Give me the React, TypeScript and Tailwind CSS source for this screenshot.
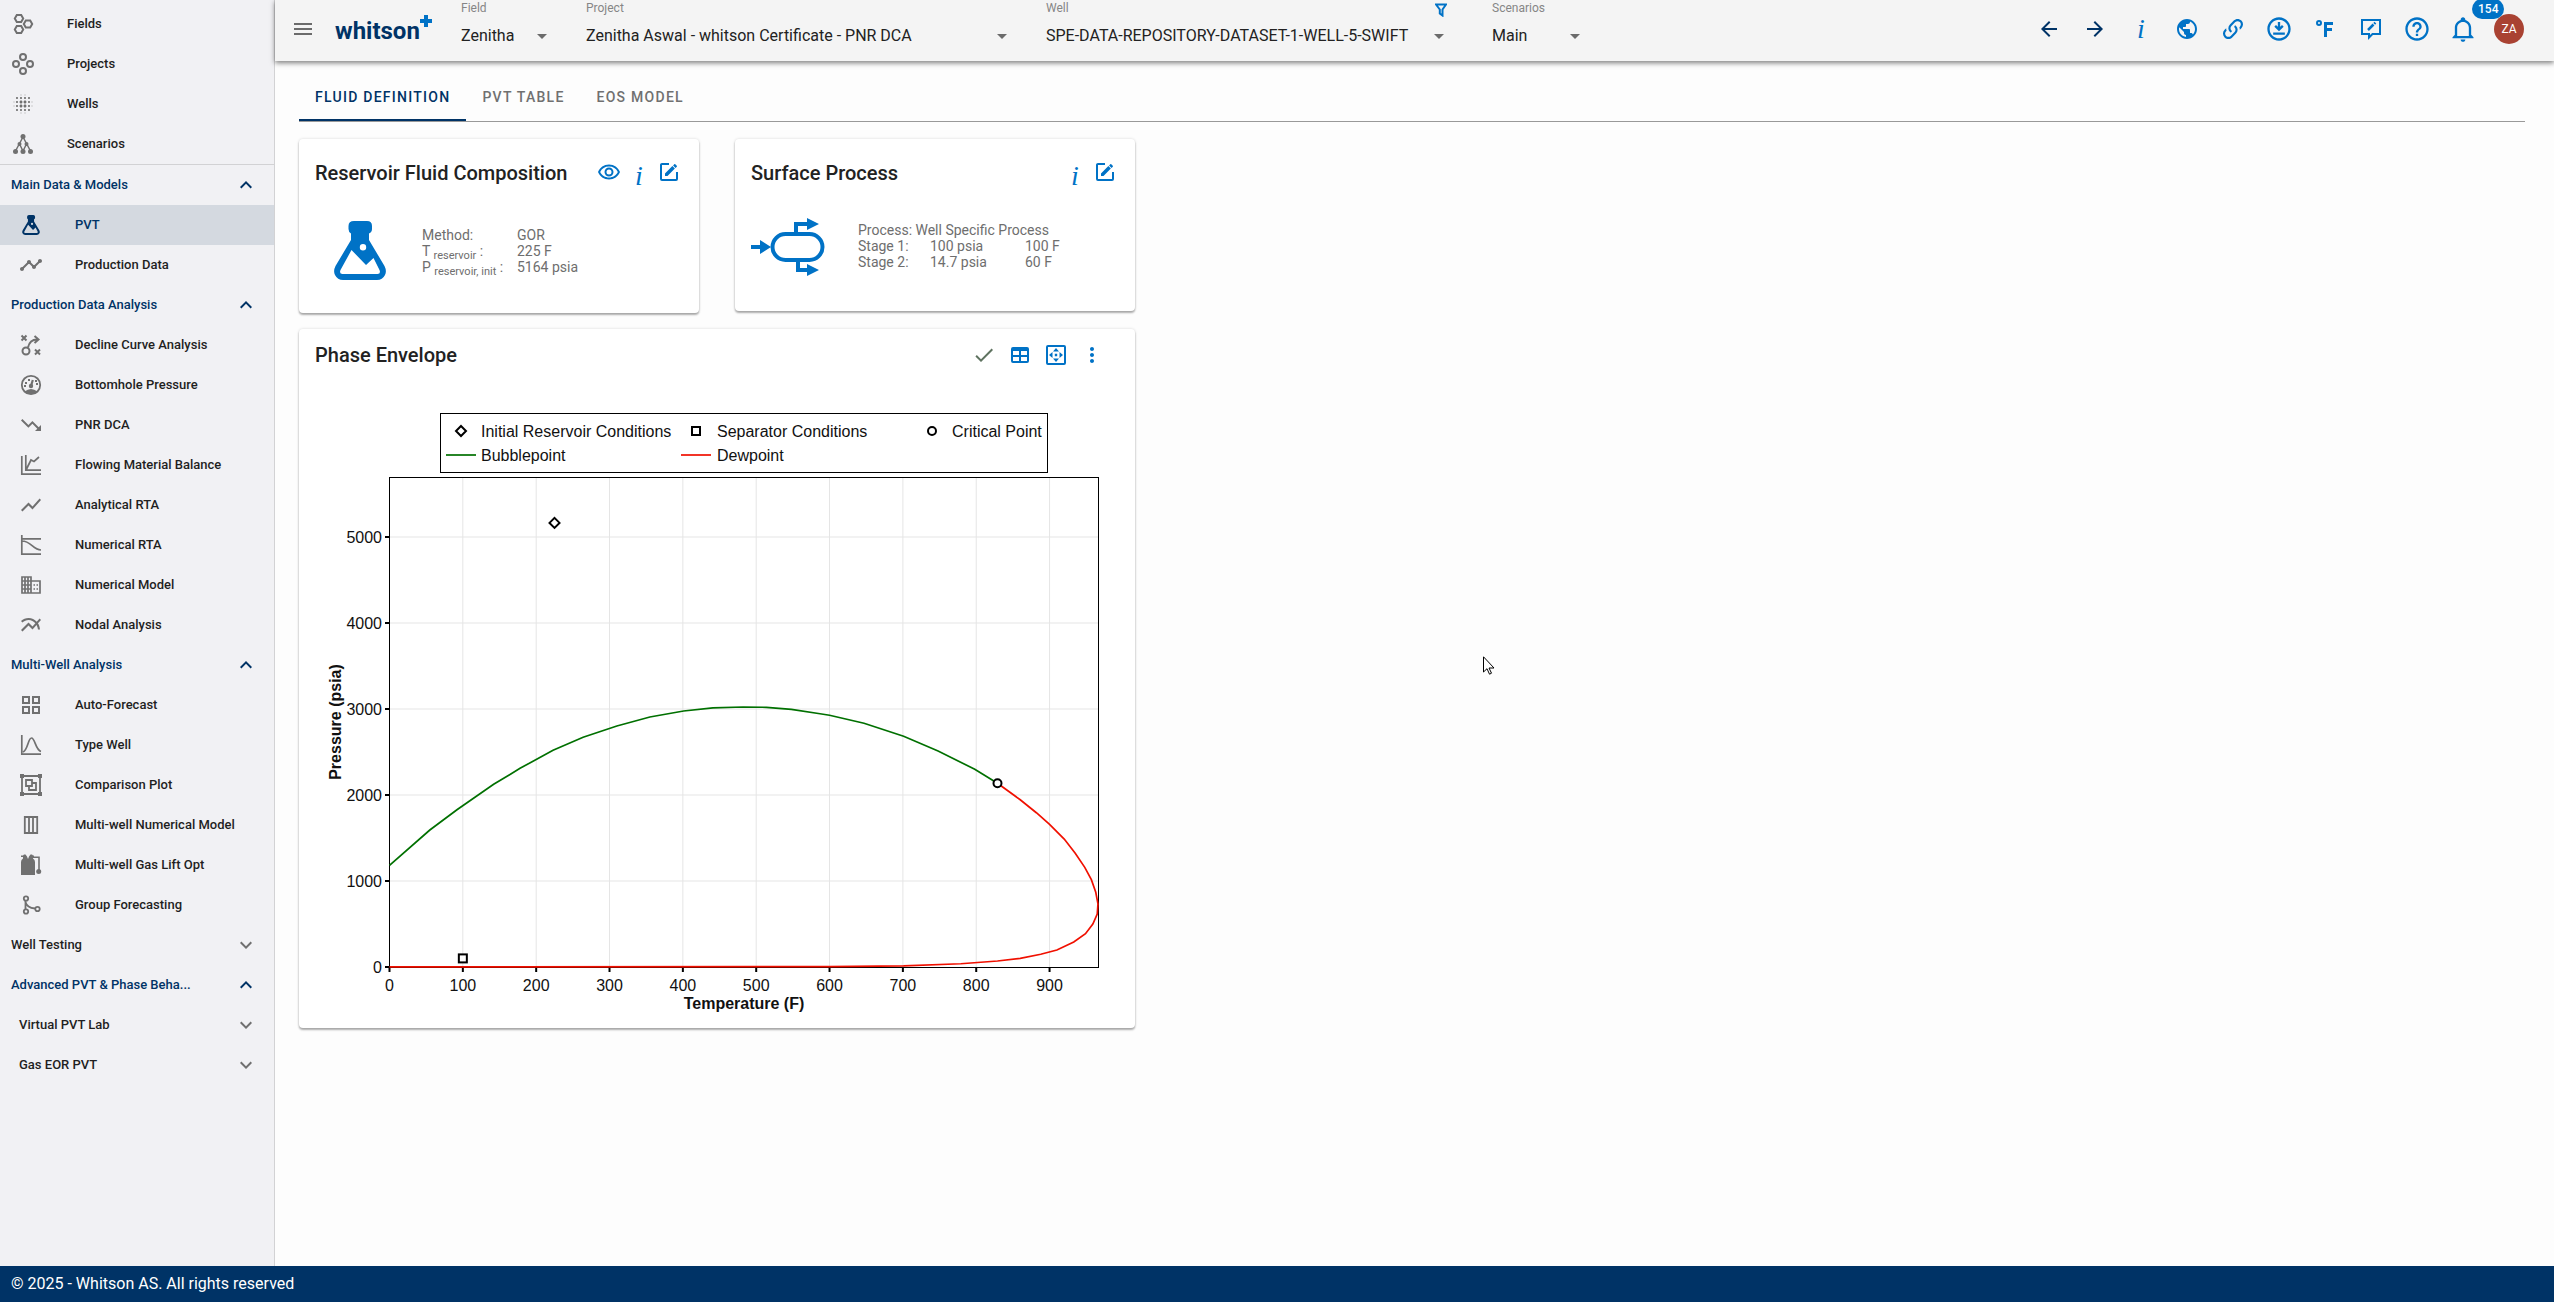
import { useState } from "react";
import {
  MdArrowBack,
  MdArrowDropDown,
  MdArrowForward,
  MdBlurOn,
  MdCheck,
  MdHelpOutline,
  MdKeyboardArrowDown,
  MdKeyboardArrowUp,
  MdMenu,
  MdMoreVert,
  MdMultilineChart,
  MdOutlineDownloadForOffline,
  MdOutlineRemoveRedEye,
  MdPublic,
  MdShowChart,
  MdTimeline,
  MdTrendingDown,
} from "react-icons/md";

/* ---------- icons ---------- */

function Fill({ d, className = "size-6" }) {
  return (
    <svg viewBox="0 0 24 24" fill="currentColor" fillRule="evenodd" className={className}>
      <path d={d} />
    </svg>
  );
}

function Line({ d, className = "size-6", width = 2, children = null }) {
  return (
    <svg viewBox="0 0 24 24" fill="none" stroke="currentColor" strokeWidth={width} className={className}>
      <path d={d} />
      {children}
    </svg>
  );
}

const hexagon = (x, y) => `M${x - 2.2} ${y - 3.5}h4.4l2 3.5-2 3.5h-4.4l-2-3.5z`;

const FieldsIcon = () => <Line d={hexagon(8, 6.5) + hexagon(17, 12) + hexagon(8, 17.5)} />;

const ProjectsIcon = () => (
  <Line d="">
    <circle cx="12" cy="5" r="3" />
    <circle cx="5" cy="12" r="3" />
    <circle cx="19" cy="12" r="3" />
    <circle cx="12" cy="19" r="3" />
  </Line>
);

const ScenariosIcon = () => (
  <svg viewBox="0 0 24 24" className="size-6" fill="currentColor">
    <path d="M12 5L4.5 19M12 5l7.5 14M8.5 12L12 19M15.5 12L12 19" stroke="currentColor" strokeWidth="1.5" />
    <circle cx="12" cy="4.5" r="2.5" />
    <circle cx="8.5" cy="12" r="2" />
    <circle cx="15.5" cy="12" r="2" />
    <circle cx="4.5" cy="19.5" r="2.5" />
    <circle cx="12" cy="19.5" r="2.5" />
    <circle cx="19.5" cy="19.5" r="2.5" />
  </svg>
);

function FlaskIcon({ className }) {
  return (
    <svg viewBox="0 0 52 59" fill="currentColor" fillRule="evenodd" className={className}>
      <path d="M20 0H33Q38 0 38 5V8Q38 11 35 12.5V19L50.5 45Q53 50 51 54Q48.5 59 43 59H9Q3.500 59 1 54Q-1 50 1.500 45L17 19V12.5Q14.5 11 14.5 8V5Q14.5 0 20 0ZM17.5 29L6.500 49Q5 53 8.500 53H43.5Q47 53 45.5 49L39.5 37L32 44ZM29 23A3.200 3.200 0 1 0 29 29.4A3.200 3.200 0 1 0 29 23Z" />
    </svg>
  );
}

const StrategyIcon = () => (
  <Line d="M2.500 2.500l5 5M7.500 2.500l-5 5M16 16.5l5 5M21 16.5l-5 5M9 14.5C10 10 12.5 6.500 18 6.500M15.5 3l4 3.500-4 3.500">
    <circle cx="7" cy="18" r="3.5" />
  </Line>
);

const GaugeIcon = () => (
  <svg viewBox="0 0 24 24" className="size-6">
    <circle cx="12" cy="12" r="9.2" fill="none" stroke="currentColor" strokeWidth="1.8" />
    <path d="M5.500 18.5Q12 13.5 18.5 18.5Q12 24 5.500 18.5Z" fill="currentColor" />
    <path d="M12 13l1.800-6" stroke="currentColor" strokeWidth="2.2" />
    <circle cx="12" cy="13" r="2.2" fill="currentColor" />
    <path d="M6 10h2M9 7h2M16 8h2M17 11h2M5 13h2" stroke="currentColor" strokeWidth="1.8" />
  </svg>
);

const BalanceIcon = () => <Line d="M2.800 3v18.2H22M6.800 2v15.2H22M7.500 16L12 7l3 1.500L20 4" width={1.7} />;
const RtaIcon = () => <Line d="M2.800 2v19.2H22M3 5.800h19M3 8C12 8 14 17 22 17" width={1.7} />;
const BellCurveIcon = () => <Line d="M2.800 2v19.2H22M4 19C9 17 9 5 12.5 5S16.5 17 22 18.5" width={1.7} />;

const BuildingIcon = () => (
  <Line d="M3 4h9v16H3zM12 8h9v12h-9M3 8h9M3 12h9M3 16h9M6 4v16M9 4v16M14.5 12H16M14.5 16H16M17.5 12H19M17.5 16H19" width={1.7} />
);

const TilesIcon = () => (
  <Fill d="M3 11H11V3H3M5 5H9V9H5M13 21H21V13H13M15 15H19V19H15M3 21H11V13H3M5 15H9V19H5M13 3V11H21V3M19 9H15V5H19Z" />
);

const GroupIcon = () => (
  <Line d="M3 3h18v18H3zM7 7h6v6H7zM13 10h4v7h-7v-4" width={1.8}>
    <path d="M1 1h4v4H1zM19 1h4v4h-4zM1 19h4v4H1zM19 19h4v4h-4z" fill="currentColor" stroke="none" />
  </Line>
);

const ColumnsIcon = () => <Line d="M5.800 4h12.4v16H5.800zM10 4v16M14 4v16" width={1.8} />;

const GasLiftIcon = () => (
  <svg viewBox="0 0 24 24" className="size-6" fill="currentColor">
    <path d="M2 22V9Q2 6.500 4 5.500V4H2V2.500H4L5 1.500H6.500L8 3.500L9 6L10 3.500L11.5 1.500H13L14 2.500H15V4H14V5.500Q16 6.500 16 9V22Z" />
    <path d="M14 4.300h6v14" fill="none" stroke="currentColor" strokeWidth="1.6" />
    <circle cx="19.7" cy="18.5" r="2.5" />
  </svg>
);

const BranchIcon = () => (
  <Line d="M6.500 7v10M6.500 9C7.500 13.5 11 15 16 15.5" width={1.8}>
    <circle cx="7" cy="5.5" r="2.2" />
    <circle cx="7" cy="18.5" r="2.2" />
    <circle cx="18.5" cy="16" r="2.2" />
  </Line>
);

const InfoIcon = () => <span className="font-['Liberation_Serif',serif] text-[28px] leading-6 italic">i</span>;

const LinkIcon = () => (
  <Fill
    className="size-[26px]"
    d="M10.59,13.41C11,13.8 11,14.44 10.59,14.83C10.2,15.22 9.56,15.22 9.17,14.83C7.22,12.88 7.22,9.71 9.17,7.76V7.76L12.71,4.22C14.66,2.27 17.83,2.27 19.78,4.22C21.73,6.17 21.73,9.34 19.78,11.29L18.29,12.78C18.3,11.96 18.17,11.14 17.89,10.36L18.36,9.88C19.54,8.71 19.54,6.81 18.36,5.64C17.19,4.46 15.29,4.46 14.12,5.64L10.59,9.17C9.41,10.34 9.41,12.24 10.59,13.41M13.41,9.17C13.8,8.78 14.44,8.78 14.83,9.17C16.78,11.12 16.78,14.29 14.83,16.24V16.24L11.29,19.78C9.34,21.73 6.17,21.73 4.22,19.78C2.27,17.83 2.27,14.66 4.22,12.71L5.71,11.22C5.7,12.04 5.83,12.86 6.11,13.65L5.64,14.12C4.46,15.29 4.46,17.19 5.64,18.36C6.81,19.54 8.71,19.54 9.88,18.36L13.41,14.83C14.59,13.66 14.59,11.76 13.41,10.59C13,10.2 13,9.56 13.41,9.17Z"
  />
);

const FahrenheitIcon = () => (
  <Fill d="M11,20V5H20V8H14V11H19V14H14V20H11M6,3A3,3 0 0,1 9,6A3,3 0 0,1 6,9A3,3 0 0,1 3,6A3,3 0 0,1 6,3M6,5A1,1 0 0,0 5,6A1,1 0 0,0 6,7A1,1 0 0,0 7,6A1,1 0 0,0 6,5Z" />
);

const FeedbackIcon = () => (
  <Line d="M3 3h18v14h-7.500L10 20.5V17H3z">
    <path d="M9 13l5.500-5.500M15.2 6.800l1.200-1.200" strokeWidth="2.5" />
  </Line>
);

const BellIcon = () => (
  <Fill
    className="size-7"
    d="M10 21H14C14 22.1 13.1 23 12 23S10 22.1 10 21M21 19V20H3V19L5 17V11C5 7.9 7 5.2 10 4.3V4C10 2.9 10.9 2 12 2S14 2.9 14 4V4.3C17 5.2 19 7.9 19 11V17L21 19M17 11C17 8.2 14.8 6 12 6S7 8.2 7 11V18H17V11Z"
  />
);

const EditIcon = () => (
  <Fill d="M5,3C3.89,3 3,3.89 3,5V19A2,2 0 0,0 5,21H19A2,2 0 0,0 21,19V12H19V19H5V5H12V3H5M17.78,4C17.61,4 17.43,4.07 17.3,4.2L16.08,5.41L18.58,7.91L19.8,6.7C20.06,6.44 20.06,6 19.8,5.75L18.25,4.2C18.12,4.07 17.95,4 17.78,4M15.37,6.12L8,13.5V16H10.5L17.87,8.62L15.37,6.12Z" />
);

const TableIcon = () => (
  <Fill d="M5,4H19A2,2 0 0,1 21,6V18A2,2 0 0,1 19,20H5A2,2 0 0,1 3,18V6A2,2 0 0,1 5,4M5,8V12H11V8H5M13,8V12H19V8H13M5,14V18H11V14H5M13,14V18H19V14H13Z" />
);

const FitIcon = () => (
  <svg viewBox="0 0 24 24" className="size-6" fill="currentColor">
    <rect x="3" y="3" width="18" height="18" rx="1" fill="none" stroke="currentColor" strokeWidth="2" />
    <path d="M12 5l3 3.500H9zM12 19l3-3.500H9zM5 12l3.500-3v6zM19 12l-3.500-3v6zM10.8 10.8h2.400v2.400h-2.400z" />
  </svg>
);

const SeparatorIcon = () => (
  <svg viewBox="0 0 74 58" className="h-[58px] w-[74px] shrink-0" fill="currentColor">
    <rect x="21.5" y="16" width="50" height="26" rx="13" fill="none" stroke="currentColor" strokeWidth="4" />
    <path d="M0 27h9v-5l11 7-11 7v-5H0zM43 15V4h13V0l12 6-12 6V8h-9v7zM45 43v11h11v4l12-6-12-6v4h-7v-7z" />
  </svg>
);

/* ---------- sidebar ---------- */

const topLinks = [
  { label: "Fields", icon: <FieldsIcon /> },
  { label: "Projects", icon: <ProjectsIcon /> },
  { label: "Wells", icon: <MdBlurOn className="size-6" /> },
  { label: "Scenarios", icon: <ScenariosIcon /> },
];

const sections = [
  {
    label: "Main Data & Models",
    items: [
      { label: "PVT", icon: <FlaskIcon className="mx-[3px] h-5 w-[18px]" /> },
      { label: "Production Data", icon: <MdTimeline className="size-6" /> },
    ],
  },
  {
    label: "Production Data Analysis",
    items: [
      { label: "Decline Curve Analysis", icon: <StrategyIcon /> },
      { label: "Bottomhole Pressure", icon: <GaugeIcon /> },
      { label: "PNR DCA", icon: <MdTrendingDown className="size-6" /> },
      { label: "Flowing Material Balance", icon: <BalanceIcon /> },
      { label: "Analytical RTA", icon: <MdShowChart className="size-6" /> },
      { label: "Numerical RTA", icon: <RtaIcon /> },
      { label: "Numerical Model", icon: <BuildingIcon /> },
      { label: "Nodal Analysis", icon: <MdMultilineChart className="size-6" /> },
    ],
  },
  {
    label: "Multi-Well Analysis",
    items: [
      { label: "Auto-Forecast", icon: <TilesIcon /> },
      { label: "Type Well", icon: <BellCurveIcon /> },
      { label: "Comparison Plot", icon: <GroupIcon /> },
      { label: "Multi-well Numerical Model", icon: <ColumnsIcon /> },
      { label: "Multi-well Gas Lift Opt", icon: <GasLiftIcon /> },
      { label: "Group Forecasting", icon: <BranchIcon /> },
    ],
  },
];

function SectionButton({ label, open = false, nested = false }) {
  return (
    <button
      aria-expanded={open}
      className={`flex h-10 w-full items-center justify-between pr-4 text-left ${nested ? "pl-[19px]" : "pl-[11px]"} ${open ? "text-[#003366]" : "text-[#1f1f1f]"}`}
    >
      {label}
      {open ? <MdKeyboardArrowUp className="size-6" /> : <MdKeyboardArrowDown className="size-6 text-[#707070]" />}
    </button>
  );
}

function Sidebar() {
  const [active, setActive] = useState("PVT");

  return (
    <nav className="w-[275px] shrink-0 border-r border-[#d2d2d4] bg-[#f1f1f4] pt-1 text-[13px] font-medium text-[#1f1f1f]">
      <div className="border-b border-[#d2d2d4]">
        {topLinks.map((item) => (
          <a key={item.label} href="#" className="flex h-10 items-center gap-8 pl-[11px]">
            <span className="text-[#707070]">{item.icon}</span>
            {item.label}
          </a>
        ))}
      </div>

      {sections.map((section) => (
        <div key={section.label}>
          <SectionButton label={section.label} open />
          {section.items.map((item) => {
            const selected = item.label === active;
            return (
              <a
                key={item.label}
                href="#"
                onClick={() => setActive(item.label)}
                className={`flex h-10 items-center gap-8 pl-[19px] ${selected ? "bg-[#d4d9e0] text-[#003366]" : ""}`}
              >
                <span className={selected ? "" : "text-[#707070]"}>{item.icon}</span>
                {item.label}
              </a>
            );
          })}
        </div>
      ))}

      <SectionButton label="Well Testing" />
      <SectionButton label="Advanced PVT & Phase Beha..." open />
      <SectionButton label="Virtual PVT Lab" nested />
      <SectionButton label="Gas EOR PVT" nested />
    </nav>
  );
}

/* ---------- header ---------- */

function Picker({ id, label, value, className, filter = false }) {
  return (
    <div className={`relative self-start ${className}`}>
      <div className="flex h-4 items-center justify-between">
        <label htmlFor={id} className="text-xs leading-4 text-[#868686]">
          {label}
        </label>
        {filter && (
          <svg viewBox="0 0 12 14" className="mt-1 h-[14px] w-3" fill="none" stroke="#0072c6" strokeWidth="2">
            <path d="M1 1.500h10L7.500 6.500V12.5L4.800 10.5V6.500z" />
          </svg>
        )}
      </div>
      <select id={id} className="mt-2 block h-6 w-full appearance-none bg-transparent text-base leading-6 text-[#222]">
        <option>{value}</option>
      </select>
      <MdArrowDropDown className="pointer-events-none absolute right-[-4px] bottom-0 size-6 text-[#6b6b6b]" />
    </div>
  );
}

const actions = [
  { name: "Back", icon: <MdArrowBack className="size-6 text-[#003366]" /> },
  { name: "Forward", icon: <MdArrowForward className="size-6 text-[#003366]" /> },
  { name: "Info", icon: <InfoIcon /> },
  { name: "Language", icon: <MdPublic className="size-6" /> },
  { name: "Copy link", icon: <LinkIcon /> },
  { name: "Download", icon: <MdOutlineDownloadForOffline className="size-7" /> },
  { name: "Units", icon: <FahrenheitIcon /> },
  { name: "Feedback", icon: <FeedbackIcon /> },
  { name: "Help", icon: <MdHelpOutline className="size-7" /> },
];

function Header() {
  return (
    <header className="relative flex h-[61px] bg-[#f4f4f4] pr-[22px] shadow-[0_2px_5px_rgba(0,0,0,0.5)]">
      <button aria-label="Menu" className="ml-4 h-[58px] text-[#6b6b6b]">
        <MdMenu className="size-6" />
      </button>
      <a href="#" className="ml-5 flex h-[61px] w-[97px] items-center text-2xl font-bold text-[#003366]">
        whitson
        <svg viewBox="0 0 12 12" className="mb-5 size-3 shrink-0" fill="#0072c6">
          <path d="M4 0h4v4h4v4H8v4H4V8H0V4h4z" />
        </svg>
      </a>
      <Picker id="field" label="Field" value="Zenitha" className="ml-[29px] w-[89px]" />
      <Picker id="project" label="Project" value="Zenitha Aswal - whitson Certificate - PNR DCA" className="ml-9 w-[424px]" />
      <Picker id="well" label="Well" value="SPE-DATA-REPOSITORY-DATASET-1-WELL-5-SWIFT" className="ml-9 w-[401px]" filter />
      <Picker id="scenario" label="Scenarios" value="Main" className="ml-[45px] w-[91px]" />

      <div className="ml-auto flex h-[58px] items-center text-[#0072c6]">
        {actions.map((action) => (
          <button key={action.name} aria-label={action.name} className="flex w-[46px] justify-center">
            {action.icon}
          </button>
        ))}
        <button aria-label="Notifications" className="relative flex w-[46px] justify-center">
          <BellIcon />
          <span className="absolute -top-4 left-8 z-10 h-5 rounded-full bg-[#0072c6] px-[6px] text-xs leading-5 font-medium text-white">
            154
          </span>
        </button>
        <button className="mx-2 size-[30px] rounded-full bg-[#a94232] text-xs text-white">ZA</button>
      </div>
    </header>
  );
}

/* ---------- content ---------- */

function Tabs() {
  const [tab, setTab] = useState("FLUID DEFINITION");
  return (
    <div role="tablist" className="flex border-b border-[#999]">
      {["FLUID DEFINITION", "PVT TABLE", "EOS MODEL"].map((name) => (
        <button
          key={name}
          role="tab"
          aria-selected={tab === name}
          onClick={() => setTab(name)}
          className={`h-12 border-b-2 px-4 pt-[2px] text-sm font-medium tracking-[0.09em] ${tab === name ? "border-[#003366] text-[#003366]" : "border-transparent text-[#707070]"}`}
        >
          {name}
        </button>
      ))}
    </div>
  );
}

const cardStyle = "rounded bg-white shadow-[0_2px_2px_rgba(0,0,0,0.3),0_0_3px_rgba(0,0,0,0.15)]";

function CompositionCard() {
  return (
    <section className={`h-[174px] px-4 pt-[22px] ${cardStyle}`}>
      <div className="flex h-6 items-center">
        <h2 className="text-xl font-medium text-[#222]">Reservoir Fluid Composition</h2>
        <div className="-mr-px ml-auto flex pt-[2px] text-[#0072c6]">
          <button aria-label="Show" className="flex w-[30px] justify-center">
            <MdOutlineRemoveRedEye className="size-6" />
          </button>
          <button aria-label="About" className="flex w-[30px] justify-center pt-1">
            <InfoIcon />
          </button>
          <button aria-label="Edit composition" className="flex w-[30px] justify-center">
            <EditIcon />
          </button>
        </div>
      </div>
      <div className="mt-9 flex pl-[19px]">
        <FlaskIcon className="h-[59px] w-[52px] text-[#0072c6]" />
        <table className="mt-[6px] ml-9 h-12 text-left text-sm leading-4 text-[#6e6e6e]">
          <tbody>
            <tr>
              <th className="w-[95px] font-normal">Method:</th>
              <td>GOR</td>
            </tr>
            <tr>
              <th className="font-normal">
                T <sub className="text-[11px]">reservoir</sub> :
              </th>
              <td>225 F</td>
            </tr>
            <tr>
              <th className="font-normal">
                P <sub className="text-[11px]">reservoir, init</sub> :
              </th>
              <td>5164 psia</td>
            </tr>
          </tbody>
        </table>
      </div>
    </section>
  );
}

function SurfaceCard() {
  return (
    <section className={`h-[172px] px-4 pt-[22px] ${cardStyle}`}>
      <div className="flex h-6 items-center">
        <h2 className="text-xl font-medium text-[#222]">Surface Process</h2>
        <div className="-mr-px ml-auto flex pt-[2px] text-[#0072c6]">
          <button aria-label="About" className="flex w-[30px] justify-center pt-1">
            <InfoIcon />
          </button>
          <button aria-label="Edit process" className="flex w-[30px] justify-center">
            <EditIcon />
          </button>
        </div>
      </div>
      <div className="mt-[33px] flex text-[#0072c6]">
        <SeparatorIcon />
        <table className="mt-1 ml-[33px] h-12 text-left text-sm leading-4 text-[#6e6e6e]">
          <tbody>
            <tr>
              <td colSpan={3}>Process: Well Specific Process</td>
            </tr>
            <tr>
              <th className="w-[72px] font-normal">Stage 1:</th>
              <td className="w-[95px]">100 psia</td>
              <td>100 F</td>
            </tr>
            <tr>
              <th className="font-normal">Stage 2:</th>
              <td>14.7 psia</td>
              <td>60 F</td>
            </tr>
          </tbody>
        </table>
      </div>
    </section>
  );
}

// [temperature F, pressure psia]
const bubblepoint = [
  [0, 1182], [55, 1593], [92, 1829], [142, 2124], [178, 2310], [223, 2520], [264, 2671],
  [310, 2802], [355, 2907], [401, 2977], [441, 3012], [482, 3023], [514, 3020], [548, 2996],
  [587, 2945], [600, 2927], [647, 2834], [701, 2683], [748, 2512], [798, 2299], [829, 2136],
];
const dewpoint = [
  [829, 2136], [860, 1945], [882, 1794], [900, 1659], [920, 1488], [935, 1322], [948, 1159],
  [957, 1015], [963, 869], [966, 733], [965, 616], [959, 500], [949, 387], [933, 291],
  [910, 198], [888, 148], [860, 101], [829, 70], [779, 38], [701, 12], [600, 4], [0, 2],
];

const px = (t) => 74.5 + t * 0.7334;
const py = (p) => 568 - p * 0.086;
const toPoints = (data) => data.map(([t, p]) => `${px(t)},${py(p)}`).join(" ");

function PhaseChart() {
  const temps = [0, 100, 200, 300, 400, 500, 600, 700, 800, 900];
  const pressures = [0, 1000, 2000, 3000, 4000, 5000];

  return (
    <svg viewBox="0 0 804 620" className="w-full font-['Liberation_Sans',Arial,sans-serif] text-base" fill="#111">
      <g stroke="#e5e5e5">
        {temps.slice(1).map((t) => (
          <line key={t} x1={px(t)} x2={px(t)} y1="79" y2="568" />
        ))}
        {pressures.slice(1).map((p) => (
          <line key={p} x1="74" x2="783" y1={py(p)} y2={py(p)} />
        ))}
      </g>
      <rect x="74.5" y="78.5" width="709" height="490" fill="none" stroke="#000" />
      {temps.map((t) => (
        <g key={t}>
          <line x1={px(t)} x2={px(t)} y1="568" y2="573" stroke="#000" strokeWidth="2" />
          <text x={px(t)} y="592" textAnchor="middle">{t}</text>
        </g>
      ))}
      {pressures.map((p) => (
        <g key={p}>
          <line x1="70" x2="74" y1={py(p)} y2={py(p)} stroke="#000" strokeWidth="2" />
          <text x="67" y={py(p) + 6} textAnchor="end">{p}</text>
        </g>
      ))}
      <text x="429" y="610" textAnchor="middle" fontWeight="bold">Temperature (F)</text>
      <text transform="translate(26 323) rotate(-90)" textAnchor="middle" fontWeight="bold">Pressure (psia)</text>

      <g fill="none" strokeWidth="1.7">
        <polyline points={toPoints(bubblepoint)} stroke="#007000" />
        <polyline points={toPoints(dewpoint)} stroke="#f01000" />
      </g>

      <rect x="125.5" y="14.5" width="607" height="59" fill="#fff" stroke="#000" />
      <g fill="#fff" stroke="#000" strokeWidth="2">
        <path d="M146 27l5 5-5 5-5-5z" />
        <rect x="377" y="28" width="8" height="8" />
        <circle cx="617" cy="32" r="4" />
        <path d={`M${px(225)} ${py(5164) - 5}l5 5-5 5-5-5z`} />
        <rect x={px(100) - 4} y={py(100) - 4} width="8" height="8" />
        <circle cx={px(829)} cy={py(2136)} r="4" />
      </g>
      <line x1="131" x2="161" y1="56" y2="56" stroke="#007000" strokeWidth="1.7" />
      <line x1="366" x2="396" y1="56" y2="56" stroke="#f01000" strokeWidth="1.7" />
      <text x="166" y="38">Initial Reservoir Conditions</text>
      <text x="402" y="38">Separator Conditions</text>
      <text x="637" y="38">Critical Point</text>
      <text x="166" y="62">Bubblepoint</text>
      <text x="402" y="62">Dewpoint</text>
    </svg>
  );
}

function PhaseCard() {
  return (
    <section className={`col-span-2 px-4 pt-[14px] pb-[9px] ${cardStyle}`}>
      <div className="flex h-6 items-center">
        <h2 className="text-xl font-medium text-[#222]">Phase Envelope</h2>
        <div className="ml-auto flex pr-[9px] text-[#0072c6]">
          <button aria-label="Status" className="flex w-9 justify-center text-[#5f7360]">
            <MdCheck className="size-6" />
          </button>
          <button aria-label="Table" className="flex w-9 justify-center">
            <TableIcon />
          </button>
          <button aria-label="Fit" className="flex w-9 justify-center">
            <FitIcon />
          </button>
          <button aria-label="More" className="flex w-9 justify-center">
            <MdMoreVert className="size-6" />
          </button>
        </div>
      </div>
      <div className="mt-8">
        <PhaseChart />
      </div>
    </section>
  );
}

export default function App() {
  return (
    <div className="flex min-h-screen flex-col bg-[#fdfdfd] font-[Roboto,sans-serif]">
      <div className="flex flex-1">
        <Sidebar />
        <div className="min-w-0 flex-1">
          <Header />
          <main className="pt-3 pr-[29px] pl-6">
            <Tabs />
            <div className="mt-[17px] grid max-w-[836px] grid-cols-2 items-start gap-x-9 gap-y-4">
              <CompositionCard />
              <SurfaceCard />
              <PhaseCard />
            </div>
          </main>
        </div>
      </div>
      <footer className="h-9 bg-[#003366] px-[11px] text-base leading-9 text-white">
        © 2025 - Whitson AS. All rights reserved
      </footer>

      {/* mouse pointer */}
      <svg viewBox="0 0 12 19" className="absolute top-[656px] left-[1483px] h-[19px] w-3" fill="#fff" stroke="#000">
        <path d="M0.500 0.800v15.2l3.500-3.300 2.500 5.500 2-1-2.500-5.200h5z" />
      </svg>
    </div>
  );
}
